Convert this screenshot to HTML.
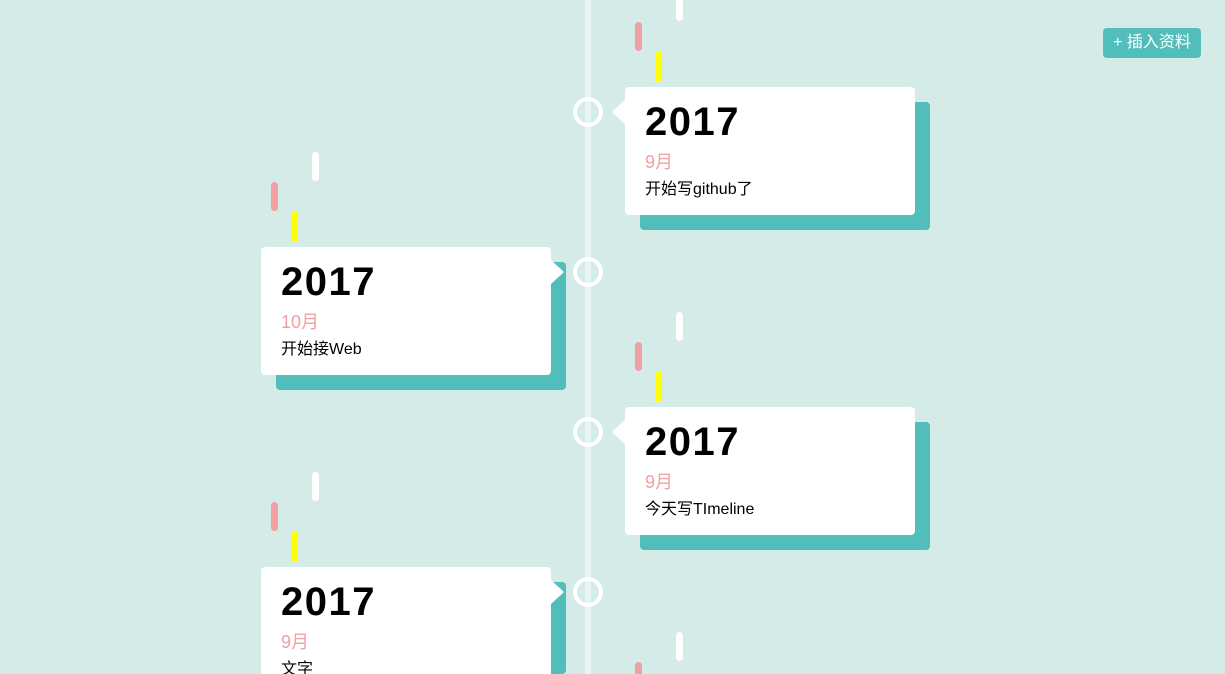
<!DOCTYPE html>
<html><head><meta charset="utf-8"><style>
*{margin:0;padding:0;box-sizing:border-box}
html,body{width:1225px;height:674px;overflow:hidden}
body{background:#d5ebe8;position:relative;font-family:"Liberation Sans","Noto Sans CJK SC",sans-serif}
.wrap{position:absolute;left:0;top:0;width:1225px;height:674px;overflow:hidden}
.line{position:absolute;left:585px;top:0;width:6px;height:674px;background:#e9f5f3}
.dot{position:absolute;width:30px;height:30px;border:4px solid #fff;border-radius:50%;left:573px}
.bar{position:absolute;width:7px;height:29px;border-radius:4px}
.w{background:#fff}.p{background:#f0a0a2}.y{background:#ffff00;border-radius:0}
.sh{position:absolute;width:290px;height:128px;background:#52bebb;border-radius:4px}
.card{position:absolute;width:290px;height:128px;background:#fff;border-radius:4px;padding:0 20px}
.card .yr{font-weight:bold;font-size:40px;letter-spacing:1.5px;line-height:40px;margin-top:15px;color:#000}
.card .m{color:#f0a0a2;font-size:18px;line-height:20px;margin-top:10px}
.card .d{color:#000;font-size:16px;line-height:20px;margin-top:8px}
.ar{position:absolute;width:0;height:0;border-top:12px solid transparent;border-bottom:12px solid transparent}
.ar.l{border-right:13px solid #fff}
.ar.r{border-left:13px solid #fff}
.btn{position:absolute;left:1103px;top:28px;width:98px;height:30px;background:#52bebb;color:#fff;border-radius:4px;font-size:16px;line-height:30px;text-align:center}
</style></head><body><div class="wrap">
<div class="line"></div>

<div class="bar w" style="left:676px;top:-8px"></div>
<div class="bar p" style="left:635px;top:22px"></div>
<div class="bar y" style="left:655px;top:52px"></div>
<div class="sh" style="left:640px;top:102px"></div>
<div class="card" style="left:625px;top:87px"><div class="yr">2017</div><div class="m">9月</div><div class="d">开始写github了</div></div>
<div class="ar l" style="left:612px;top:100px"></div>
<div class="dot" style="top:97px"></div>

<div class="bar w" style="left:312px;top:152px"></div>
<div class="bar p" style="left:271px;top:182px"></div>
<div class="bar y" style="left:291px;top:212px"></div>
<div class="sh" style="left:276px;top:262px"></div>
<div class="card" style="left:261px;top:247px"><div class="yr">2017</div><div class="m">10月</div><div class="d">开始接Web</div></div>
<div class="ar r" style="left:551px;top:260px"></div>
<div class="dot" style="top:257px"></div>

<div class="bar w" style="left:676px;top:312px"></div>
<div class="bar p" style="left:635px;top:342px"></div>
<div class="bar y" style="left:655px;top:372px"></div>
<div class="sh" style="left:640px;top:422px"></div>
<div class="card" style="left:625px;top:407px"><div class="yr">2017</div><div class="m">9月</div><div class="d">今天写TImeline</div></div>
<div class="ar l" style="left:612px;top:420px"></div>
<div class="dot" style="top:417px"></div>

<div class="bar w" style="left:312px;top:472px"></div>
<div class="bar p" style="left:271px;top:502px"></div>
<div class="bar y" style="left:291px;top:532px"></div>
<div class="sh" style="left:276px;top:582px;height:92px"></div>
<div class="card" style="left:261px;top:567px;height:107px;border-radius:4px 4px 0 0"><div class="yr">2017</div><div class="m">9月</div><div class="d">文字</div></div>
<div class="ar r" style="left:551px;top:580px"></div>
<div class="dot" style="top:577px"></div>

<div class="bar w" style="left:676px;top:632px"></div>
<div class="bar p" style="left:635px;top:662px;height:12px;border-radius:4px 4px 0 0"></div>

<div class="btn">+ 插入资料</div>
</div></body></html>
